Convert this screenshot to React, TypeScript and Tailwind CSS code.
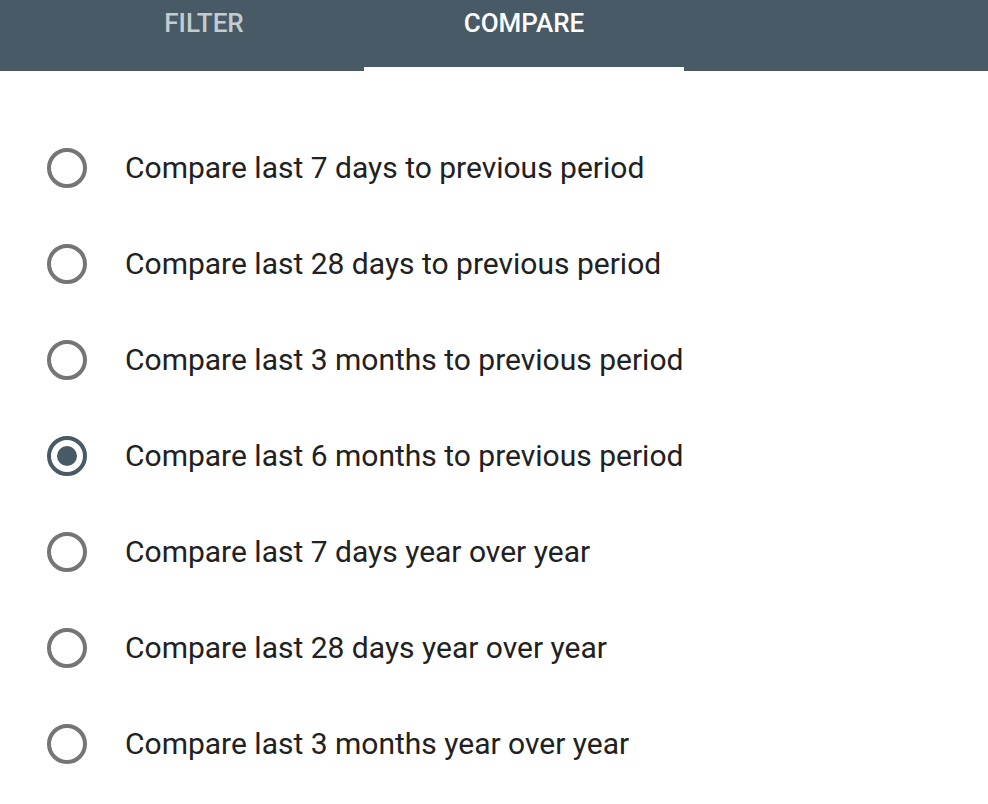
import { useState } from 'react';

const OPTIONS = [
  'Compare last 7 days to previous period',
  'Compare last 28 days to previous period',
  'Compare last 3 months to previous period',
  'Compare last 6 months to previous period',
  'Compare last 7 days year over year',
  'Compare last 28 days year over year',
  'Compare last 3 months year over year',
];

function Radio({ checked }: { checked: boolean }) {
  return (
    <span
      className={`flex h-[40px] w-[40px] shrink-0 items-center justify-center rounded-full border-[4px] ${
        checked ? 'border-[#485a65]' : 'border-[#757575]'
      }`}
    >
      {checked && <span className="h-[20px] w-[20px] rounded-full bg-[#485a65]" />}
    </span>
  );
}

export default function App() {
  const [tab, setTab] = useState<'filter' | 'compare'>('compare');
  const [selected, setSelected] = useState(3);

  return (
    <div className="min-h-screen bg-white" style={{ fontFamily: 'Roboto, "Noto Sans", sans-serif' }}>
      {/* Tabs */}
      <div className="flex h-[71px] bg-[#485a65] pl-[44px]">
        {(['filter', 'compare'] as const).map((t) => (
          <button
            key={t}
            onClick={() => setTab(t)}
            className="relative flex w-[320px] justify-center pt-[7px] text-[26px] font-medium uppercase leading-[32px]"
          >
            <span className={tab === t ? 'text-white' : 'text-white/70'}>{t}</span>
            {tab === t && <span className="absolute bottom-0 left-0 h-[4px] w-full bg-white" />}
          </button>
        ))}
      </div>

      {/* Options */}
      <div className="pt-[49px]">
        {OPTIONS.map((label, i) => (
          <label
            key={label}
            onClick={() => setSelected(i)}
            className="flex h-[96px] cursor-pointer items-center gap-[38px] pl-[47px]"
          >
            <Radio checked={selected === i} />
            <span className="pb-[2px] text-[30px] text-[#212121]">{label}</span>
          </label>
        ))}
      </div>
    </div>
  );
}
